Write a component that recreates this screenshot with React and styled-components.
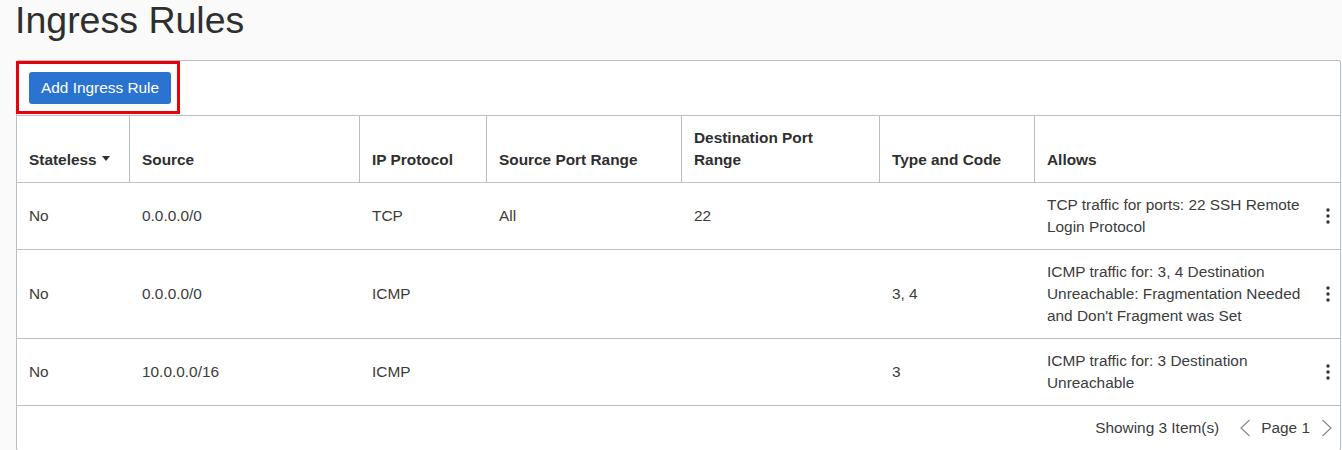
import React from "react";
import styled, { createGlobalStyle } from "styled-components";

const GlobalStyle = createGlobalStyle`
  *, *::before, *::after {
    box-sizing: border-box;
  }
  body {
    margin: 0;
    background: #fafafa;
    font-family: "Liberation Sans", Arial, sans-serif;
    color: #333;
  }
`;

const colors = {
  border: "#b9bdc4",
  text: "#3c3c3c",
  heading: "#2f2f2f",
  primary: "#2b73d0",
  highlight: "#e8000b",
  muted: "#8a8a8a",
};

const Page = styled.div`
  padding: 0 0 0 16px;
  width: 1342px;
`;

const Title = styled.h1`
  margin: 0 0 20px -1px;
  font-size: 37.5px;
  line-height: 40px;
  font-weight: 400;
  color: ${colors.heading};
`;

const Panel = styled.section`
  width: 1325px;
  background: #fff;
  border: 1px solid ${colors.border};
  border-radius: 2px;
`;

const Toolbar = styled.div`
  position: relative;
  padding: 11px 12px;
  height: 54px;
`;

const Highlight = styled.div`
  position: absolute;
  left: -1px;
  top: 0;
  width: 164px;
  height: 53px;
  border: 3px solid ${colors.highlight};
  pointer-events: none;
`;

const PrimaryButton = styled.button`
  height: 32px;
  padding: 0 12px;
  border: none;
  border-radius: 3px;
  background: ${colors.primary};
  color: #fff;
  font-family: inherit;
  font-size: 15.4px;
  cursor: pointer;
`;

const Table = styled.table`
  width: 100%;
  table-layout: fixed;
  border-collapse: separate;
  border-spacing: 0;
  font-size: 15.4px;
  line-height: 22px;
`;

const HeadCell = styled.th`
  padding: 11px ${({ $sorted }) => ($sorted ? "8px" : "28px")} 11px 12px;
  white-space: ${({ $sorted }) => ($sorted ? "nowrap" : "normal")};
  text-align: left;
  vertical-align: bottom;
  font-weight: 700;
  color: ${colors.heading};
  border-top: 1px solid ${colors.border};
  border-bottom: 1px solid ${colors.border};
  border-right: ${({ $last }) => ($last ? "none" : `1px solid ${colors.border}`)};
`;

const SortArrow = styled.span`
  display: inline-block;
  margin-left: 5px;
  vertical-align: middle;
  border-left: 4.5px solid transparent;
  border-right: 4.5px solid transparent;
  border-top: 5px solid ${colors.heading};
  position: relative;
  top: -2px;
`;

const Cell = styled.td`
  padding: 11px ${({ $tight }) => ($tight ? "4px" : "12px")} 11px 12px;
  vertical-align: middle;
  color: ${colors.text};
  border-bottom: 1px solid ${colors.border};
`;

const ActionCell = styled.td`
  padding: 0 0 0 14px;
  vertical-align: middle;
  border-bottom: 1px solid ${colors.border};
`;

const KebabButton = styled.button`
  display: block;
  padding: 0;
  border: none;
  background: none;
  cursor: pointer;
  line-height: 0;
`;

const Footer = styled.div`
  display: flex;
  justify-content: flex-end;
  align-items: center;
  padding: 11px 7px 11px 12px;
  font-size: 15.4px;
  line-height: 22px;
  color: ${colors.text};
`;

const Count = styled.span`
  margin-right: 20px;
`;

const Pager = styled.div`
  display: flex;
  align-items: center;
`;

const PageLabel = styled.span`
  margin: 0 11px 0 10px;
`;

const Chevron = ({ dir }) => (
  <svg width="12" height="18" viewBox="0 0 12 18" fill="none">
    <path
      d={dir === "left" ? "M10.5 1 L2 9 L10.5 17" : "M1.5 1 L10 9 L1.5 17"}
      stroke={colors.muted}
      strokeWidth="1.2"
    />
  </svg>
);

const Kebab = () => (
  <KebabButton aria-label="Actions">
    <svg width="4" height="16" viewBox="0 0 4 16">
      <circle cx="2" cy="2" r="1.7" fill="#333" />
      <circle cx="2" cy="8" r="1.7" fill="#333" />
      <circle cx="2" cy="14" r="1.7" fill="#333" />
    </svg>
  </KebabButton>
);

const columns = [113, 230, 127, 195, 198, 155, 277, 28];

const rules = [
  {
    stateless: "No",
    source: "0.0.0.0/0",
    protocol: "TCP",
    sourcePort: "All",
    destPort: "22",
    typeCode: "",
    allows: "TCP traffic for ports: 22 SSH Remote Login Protocol",
  },
  {
    stateless: "No",
    source: "0.0.0.0/0",
    protocol: "ICMP",
    sourcePort: "",
    destPort: "",
    typeCode: "3, 4",
    allows:
      "ICMP traffic for: 3, 4 Destination Unreachable: Fragmentation Needed and Don't Fragment was Set",
  },
  {
    stateless: "No",
    source: "10.0.0.0/16",
    protocol: "ICMP",
    sourcePort: "",
    destPort: "",
    typeCode: "3",
    allows: "ICMP traffic for: 3 Destination Unreachable",
  },
];

const App = () => (
  <Page>
    <GlobalStyle />
    <Title>Ingress Rules</Title>

    <Panel>
      <Toolbar>
        <PrimaryButton>Add Ingress Rule</PrimaryButton>
        <Highlight />
      </Toolbar>

      <Table>
        <colgroup>
          {columns.map((w, i) => (
            <col key={i} style={{ width: w }} />
          ))}
        </colgroup>
        <thead>
          <tr>
            <HeadCell $sorted>
              Stateless
              <SortArrow />
            </HeadCell>
            <HeadCell>Source</HeadCell>
            <HeadCell>IP Protocol</HeadCell>
            <HeadCell>Source Port Range</HeadCell>
            <HeadCell>Destination Port Range</HeadCell>
            <HeadCell>Type and Code</HeadCell>
            <HeadCell colSpan={2} $last>
              Allows
            </HeadCell>
          </tr>
        </thead>
        <tbody>
          {rules.map((r, i) => (
            <tr key={i}>
              <Cell>{r.stateless}</Cell>
              <Cell>{r.source}</Cell>
              <Cell>{r.protocol}</Cell>
              <Cell>{r.sourcePort}</Cell>
              <Cell>{r.destPort}</Cell>
              <Cell>{r.typeCode}</Cell>
              <Cell $tight>{r.allows}</Cell>
              <ActionCell>
                <Kebab />
              </ActionCell>
            </tr>
          ))}
        </tbody>
      </Table>

      <Footer>
        <Count>Showing 3 Item(s)</Count>
        <Pager>
          <Chevron dir="left" />
          <PageLabel>Page 1</PageLabel>
          <Chevron dir="right" />
        </Pager>
      </Footer>
    </Panel>
  </Page>
);

export default App;
